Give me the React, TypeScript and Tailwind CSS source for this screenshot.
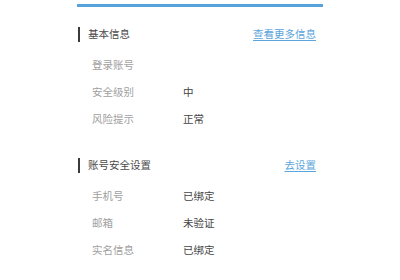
const font = { fontFamily: '"Noto Sans CJK SC", "Noto Sans", sans-serif' };

interface Row {
  label: string;
  value: string;
}

function Section({ title, link, rows }: { title: string; link: string; rows: Row[] }) {
  return (
    <div>
      <div className="flex h-[20px] items-center justify-between">
        <div className="flex items-center">
          <span className="ml-[1px] h-[15px] w-[2px] bg-[#3a3a3a]" />
          <span className="ml-[8px] text-[10.5px] leading-none text-[#4a4a4a]">{title}</span>
        </div>
        <a className="mr-[7px] text-[10.5px] leading-none text-[#5aa5dc] underline underline-offset-2">{link}</a>
      </div>
      <div className="mt-[8px]">
        {rows.map((row) => (
          <div key={row.label} className="flex h-[27px] items-center text-[10.5px] leading-none">
            <span className="ml-[15px] w-[91px] text-[#a0a0a0]">{row.label}</span>
            <span className="text-[#444444]">{row.value}</span>
          </div>
        ))}
      </div>
    </div>
  );
}

export default function App() {
  return (
    <div className="min-h-[280px] w-full bg-white" style={font}>
      <div className="mx-auto w-[246px] pt-[4px]">
        <div className="h-[3px] bg-[#55a3da]" />
        <div className="mt-[17px]">
          <Section
            title="基本信息"
            link="查看更多信息"
            rows={[
              { label: '登录账号', value: '' },
              { label: '安全级别', value: '中' },
              { label: '风险提示', value: '正常' },
            ]}
          />
        </div>
        <div className="mt-[22px]">
          <Section
            title="账号安全设置"
            link="去设置"
            rows={[
              { label: '手机号', value: '已绑定' },
              { label: '邮箱', value: '未验证' },
              { label: '实名信息', value: '已绑定' },
            ]}
          />
        </div>
      </div>
    </div>
  );
}
